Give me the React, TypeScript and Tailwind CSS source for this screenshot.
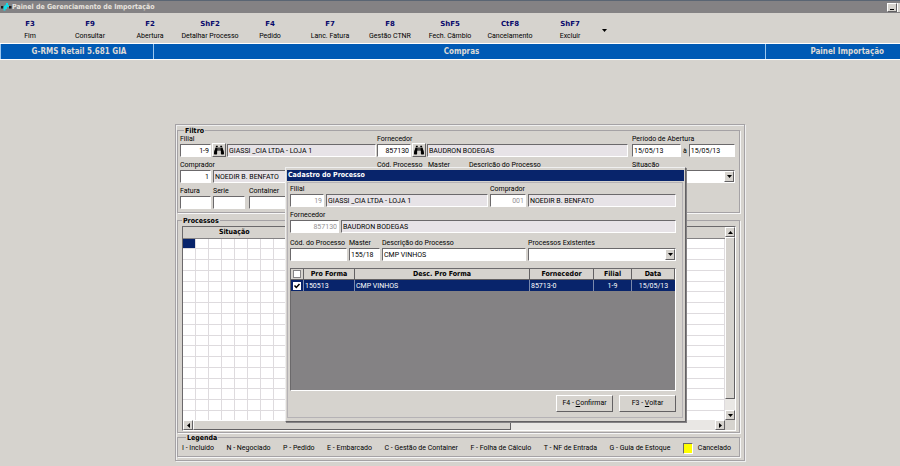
import type { ReactNode } from "react";
import { FaBinoculars } from "react-icons/fa";

const bold = "font-['DejaVu_Sans_Condensed','DejaVu_Sans',sans-serif] font-bold text-[7px]";
const sunken = "border border-t-[#6b696b] border-l-[#6b696b] border-r-white border-b-white";
const raised = "border border-t-white border-l-white border-r-[#636163] border-b-[#636163] bg-[#d6d3ce]";

const actions = [
  ["F3", "Fim"],
  ["F9", "Consultar"],
  ["F2", "Abertura"],
  ["ShF2", "Detalhar Processo"],
  ["F4", "Pedido"],
  ["F7", "Lanc. Fatura"],
  ["F8", "Gestão CTNR"],
  ["ShF5", "Fech. Câmbio"],
  ["CtF8", "Cancelamento"],
  ["ShF7", "Excluir"],
];

const legend = [
  "I - Incluído",
  "N - Negociado",
  "P - Pedido",
  "E - Embarcado",
  "C - Gestão de Container",
  "F - Folha de Cálculo",
  "T - NF de Entrada",
  "G - Guia de Estoque",
];

function Arrow({ dir }: { dir: "up" | "down" | "left" | "right" }) {
  const paths = {
    up: "M0 4h5L2.5 1z",
    down: "M0 1h5L2.5 4z",
    left: "M4 0v5L1 2.5z",
    right: "M1 0v5l3-2.500z",
  };
  return (
    <svg className="h-[5px] w-[5px]" viewBox="0 0 5 5" aria-hidden="true">
      <path d={paths[dir]} fill="#000" />
    </svg>
  );
}

function Group({ title, className = "", children }: { title: string; className?: string; children: ReactNode }) {
  return (
    <fieldset className={`min-w-0 border border-[#a5a2a5] shadow-[1px_1px_0_#f7f7f7] ${className}`}>
      <legend className={`${bold} ml-1 h-2 px-px leading-[10px]`}>{title}</legend>
      {children}
    </fieldset>
  );
}

type FieldProps = {
  id: string;
  label?: string;
  name?: string;
  value?: string;
  width: string;
  right?: boolean;
  muted?: boolean;
  readOnly?: boolean;
};

function Field({ id, label, name, value = "", width, right, muted, readOnly }: FieldProps) {
  return (
    <div className={`flex flex-col gap-px ${width}`}>
      <label htmlFor={id} className="h-[9px] whitespace-nowrap leading-[11px]">
        {label}
      </label>
      <input
        id={id}
        aria-label={label ? undefined : name}
        defaultValue={value}
        readOnly={readOnly}
        className={`h-[13px] w-full min-w-0 rounded-none px-px leading-[11px] outline-none ${sunken} ${
          readOnly ? "bg-[#e7e3e7]" : "bg-white"
        } ${right ? "text-right" : ""} ${muted ? "text-[#949294]" : ""}`}
      />
    </div>
  );
}

function Combo({ id, label, width }: { id: string; label: string; width: string }) {
  return (
    <div className={`flex flex-col gap-px ${width}`}>
      <label htmlFor={id} className="h-[9px] whitespace-nowrap leading-[11px]">
        {label}
      </label>
      <div className="relative">
        <select id={id} className={`block h-[13px] w-full appearance-none rounded-none bg-white ${sunken}`}>
          <option></option>
        </select>
        <span className={`pointer-events-none absolute top-px right-px flex h-[11px] w-[10px] items-center justify-center ${raised}`}>
          <Arrow dir="down" />
        </span>
      </div>
    </div>
  );
}

function Lookup({ label }: { label: string }) {
  return (
    <button aria-label={label} className={`flex h-[14px] w-[14px] shrink-0 items-center justify-center self-end ${raised}`}>
      <FaBinoculars className="h-[10px] w-[10px]" />
    </button>
  );
}

function ProcessGrid() {
  return (
    <div className={`ml-[4px] mr-[3px] mt-[2px] bg-[#d6d3ce] ${sunken}`}>
      <div className="flex h-[193px]">
        <div className="min-w-0 flex-1 overflow-hidden bg-white">
          <table className="h-[195px] w-full table-fixed border-collapse">
            <colgroup>
              <col className="w-[12px]" />
              {Array.from({ length: 7 }, (_, i) => (
                <col key={i} className="w-[13px]" />
              ))}
              <col />
            </colgroup>
            <thead>
              <tr className="h-[11px]">
                <th colSpan={8} className={`${bold} h-[11px] border-r border-b border-[#848284] bg-[#d6d3ce] p-0 leading-[9px]`}>
                  Situação
                </th>
                <th className="border-b border-[#848284] bg-[#d6d3ce] p-0"></th>
              </tr>
            </thead>
            <tbody>
              {Array.from({ length: 17 }, (_, r) => (
                <tr key={r}>
                  {Array.from({ length: 9 }, (_, c) => (
                    <td
                      key={c}
                      className={`border-r border-b border-[#dedbde] p-0 ${r === 0 && c === 0 ? "bg-[#08246b]" : ""}`}
                    ></td>
                  ))}
                </tr>
              ))}
            </tbody>
          </table>
        </div>
        <div className="flex w-[10px] flex-col bg-[#e9e7e4]">
          <button aria-label="Acima" className={`flex h-[10px] items-center justify-center ${raised}`}>
            <Arrow dir="up" />
          </button>
          <div className={`h-[162px] ${raised}`}></div>
          <div className="flex-1"></div>
          <button aria-label="Abaixo" className={`flex h-[10px] items-center justify-center ${raised}`}>
            <Arrow dir="down" />
          </button>
        </div>
      </div>
      <div className="flex h-[10px] bg-[#e9e7e4]">
        <button aria-label="Esquerda" className={`flex w-[10px] items-center justify-center ${raised}`}>
          <Arrow dir="left" />
        </button>
        <div className={`w-[318px] ${raised}`}></div>
        <div className="flex-1"></div>
        <button aria-label="Direita" className={`flex w-[10px] items-center justify-center ${raised}`}>
          <Arrow dir="right" />
        </button>
        <div className="w-[10px] bg-[#d6d3ce]"></div>
      </div>
    </div>
  );
}

function ProcessDialog() {
  const head = `${bold} border-r border-b border-[#636163] bg-[#d6d3ce] p-0 leading-[9px]`;
  const cell = "border-r border-[#7b8aad] px-px py-0 leading-[10px] last:border-r-0";
  return (
    <section
      role="dialog"
      aria-label="Cadastro do Processo"
      className="absolute top-[42px] left-[109px] flex w-[401px] flex-col border border-t-[#efefef] border-l-[#efefef] border-r-[#636163] border-b-[#636163] bg-[#d6d3ce] px-px pt-[2px] pb-px shadow-[1px_1px_0_#848284]"
    >
      <h2 className={`${bold} h-[11px] bg-[#08246b] pl-px leading-[11px] text-white`}>Cadastro do Processo</h2>
      <div className="mt-px mr-px mb-[2px] flex flex-col gap-[3px] border border-[#b5b2b5] pt-px pr-[6px] pb-[5px] pl-[2px]">
        <div className="flex gap-[2px]">
          <Field id="d-filial" label="Filial" value="19" width="w-[34px]" right muted />
          <Field id="d-filial-nome" name="Nome da filial" value="GIASSI _CIA LTDA - LOJA 1" width="w-[162px]" readOnly />
          <Field id="d-comprador" label="Comprador" value="001" width="w-[36px]" right muted />
          <Field id="d-comprador-nome" name="Nome do comprador" value="NOEDIR B. BENFATO" width="flex-1" readOnly />
        </div>
        <div className="flex gap-[2px]">
          <Field id="d-fornecedor" label="Fornecedor" value="857130" width="w-[49px]" right muted />
          <Field id="d-fornecedor-nome" name="Nome do fornecedor" value="BAUDRON BODEGAS" width="flex-1" readOnly />
        </div>
        <div className="mt-[2px] flex gap-[2px]">
          <Field id="d-cod" label="Cód. do Processo" width="w-[57px]" />
          <Field id="d-master" label="Master" value="155/18" width="w-[31px]" />
          <Field id="d-desc" label="Descrição do Processo" value="CMP VINHOS" width="w-[144px]" />
          <Combo id="d-existentes" label="Processos Existentes" width="flex-1" />
        </div>
        <div className={`mt-[4px] h-[123px] bg-[#848284] ${sunken}`}>
          <table className="w-full table-fixed border-separate border-spacing-0">
            <colgroup>
              <col className="w-[13px]" />
              <col className="w-[51px]" />
              <col />
              <col className="w-[64px]" />
              <col className="w-[38px]" />
              <col className="w-[43px]" />
            </colgroup>
            <thead>
              <tr className="h-[11px]">
                <th className={head}>
                  <input type="checkbox" aria-label="Selecionar todos" className="mx-auto block h-[8px] w-[8px] appearance-none border border-[#848284] bg-white" />
                </th>
                <th className={head}>Pro Forma</th>
                <th className={head}>Desc. Pro Forma</th>
                <th className={head}>Fornecedor</th>
                <th className={head}>Filial</th>
                <th className={head}>Data</th>
              </tr>
            </thead>
            <tbody>
              <tr className="h-[11px] bg-[#08246b] text-white">
                <td className={cell}>
                  <span className="relative mx-auto block h-[8px] w-[8px]">
                    <input type="checkbox" defaultChecked aria-label="Selecionar 150513" className="block h-[8px] w-[8px] appearance-none bg-white" />
                    <svg className="pointer-events-none absolute inset-0 h-[8px] w-[8px]" viewBox="0 0 8 8" aria-hidden="true">
                      <path d="M1.500 3.500L3.300 5.500L6.500 2" fill="none" stroke="#000" strokeWidth="1.500" />
                    </svg>
                  </span>
                </td>
                <td className={cell}>150513</td>
                <td className={cell}>CMP VINHOS</td>
                <td className={cell}>85713-0</td>
                <td className={`${cell} text-center`}>1-9</td>
                <td className={`${cell} text-center`}>15/05/13</td>
              </tr>
            </tbody>
          </table>
        </div>
        <div className="mt-px flex justify-end gap-[6px]">
          <button className={`h-[17px] w-[57px] ${raised}`}>
            F4 - <u>C</u>onfirmar
          </button>
          <button className={`h-[17px] w-[57px] ${raised}`}>
            F3 - <u>V</u>oltar
          </button>
        </div>
      </div>
    </section>
  );
}

export default function App() {
  return (
    <div className="min-h-screen overflow-hidden bg-[#d6d3ce] font-['Roboto','Liberation_Sans',sans-serif] text-[7px] leading-[9px] text-black">
      <header className="flex h-[13px] items-center border-t border-[#5a6573] bg-[#848284]">
        <svg className="h-[10px] w-[12px]" viewBox="0 0 12 10" aria-hidden="true">
          <path d="M1 4h2.500v2.500H1zM9 4h2.500v2.500H9z" fill="#1c1c1c" />
          <path d="M3.500 8.500V4.500L6 2.500V1h2v2h1v2H7v2H5.500v1.500z" fill="#18dbe7" />
        </svg>
        <h1 className={`${bold} text-[#e7e3de]`}>Painel de Gerenciamento de Importação</h1>
        <div className="ml-auto flex">
          <button aria-label="Minimizar" className={`flex h-[9px] w-[10px] items-end justify-center pb-px ${raised}`}>
            <span className="h-px w-[4px] bg-black"></span>
          </button>
          <span className="h-[9px] w-[3px] border-l border-white bg-[#d6d3ce]"></span>
        </div>
      </header>

      <nav className="flex h-[30px] items-center pt-[4px]">
        {actions.map(([key, text]) => (
          <button key={key} className="flex w-[60px] flex-col items-center gap-[3px] whitespace-nowrap">
            <span className="font-['DejaVu_Sans',sans-serif] text-[7px] leading-[9px] font-bold text-[#08086b]">{key}</span>
            <span className="leading-[9px]">{text}</span>
          </button>
        ))}
        <button aria-label="Mais opções" className="ml-[2px]">
          <Arrow dir="down" />
        </button>
      </nav>

      <div className="flex h-[17px] items-stretch border-t border-b border-t-white border-b-white bg-[#005ab5] font-['DejaVu_Sans_Condensed','DejaVu_Sans',sans-serif] text-[8px] leading-[16px] font-bold text-[#dedbd6]">
        <div className="w-[154px] border-r border-l border-[#9cc7ef] pl-1 text-center">G-RMS Retail 5.681 GIA</div>
        <div className="flex-1 pl-1 text-center">Compras</div>
        <div className="w-[135px] border-l border-[#9cc7ef] pr-4 text-right">Painel Importação</div>
      </div>

      <main className="flex justify-center pt-[64px] pl-5">
        <div className="relative w-[570px] border border-[#a5a2a5] px-px pb-[3px] shadow-[inset_1px_1px_0_#efefef,1px_1px_0_#efefef]">
          <Group title="Filtro" className="mt-px mr-[3px] pr-[4px] pb-[3px] pl-[2px]">
            <div className="flex flex-col gap-[3px]">
              <div className="flex gap-px">
                <Field id="filial" label="Filial" value="1-9" width="w-[31px]" right />
                <Lookup label="Buscar filial" />
                <Field id="filial-nome" name="Nome da filial" value="GIASSI _CIA LTDA - LOJA 1" width="w-[149px]" readOnly />
                <Field id="fornecedor" label="Fornecedor" value="857130" width="w-[34px]" right />
                <Lookup label="Buscar fornecedor" />
                <Field id="fornecedor-nome" name="Nome do fornecedor" value="BAUDRON BODEGAS" width="flex-1" readOnly />
                <div className="ml-[3px] flex w-[103px] gap-[2px]">
                  <Field id="inicio" label="Período de Abertura" value="15/05/13" width="w-[49px]" />
                  <span className="self-end pb-px">à</span>
                  <Field id="fim" name="Fim do período" value="15/05/13" width="flex-1" />
                </div>
              </div>
              <div className="flex gap-[2px]">
                <Field id="comprador" label="Comprador" value="1" width="w-[31px]" right />
                <Field id="comprador-nome" name="Nome do comprador" value="NOEDIR B. BENFATO" width="w-[162px]" readOnly />
                <Field id="cod" label="Cód. Processo" width="w-[49px]" />
                <Field id="master" label="Master" width="w-[39px]" />
                <Field id="desc" label="Descrição do Processo" width="flex-1" />
                <Combo id="situacao" label="Situação" width="w-[103px]" />
              </div>
              <div className="flex gap-[2px]">
                <Field id="fatura" label="Fatura" width="w-[31px]" />
                <Field id="serie" label="Serie" width="w-[32px]" />
                <div className="ml-[2px]">
                  <Field id="container" label="Container" width="w-[90px]" />
                </div>
              </div>
            </div>
          </Group>

          <Group title="Processos" className="mt-[3px] mr-[3px] pb-px">
            <ProcessGrid />
          </Group>

          <Group title="Legenda" className="mr-[3px] px-[4px] pb-[2px]">
            <div className="flex h-[13px] items-center justify-between pt-px pr-[4px] whitespace-nowrap">
              {legend.map((item) => (
                <span key={item}>{item}</span>
              ))}
              <span className="flex items-center gap-[5px]">
                <span className={`h-[11px] w-[10px] bg-[#ffff00] ${sunken}`}></span>
                Cancelado
              </span>
            </div>
          </Group>

          <ProcessDialog />
        </div>
      </main>
    </div>
  );
}
